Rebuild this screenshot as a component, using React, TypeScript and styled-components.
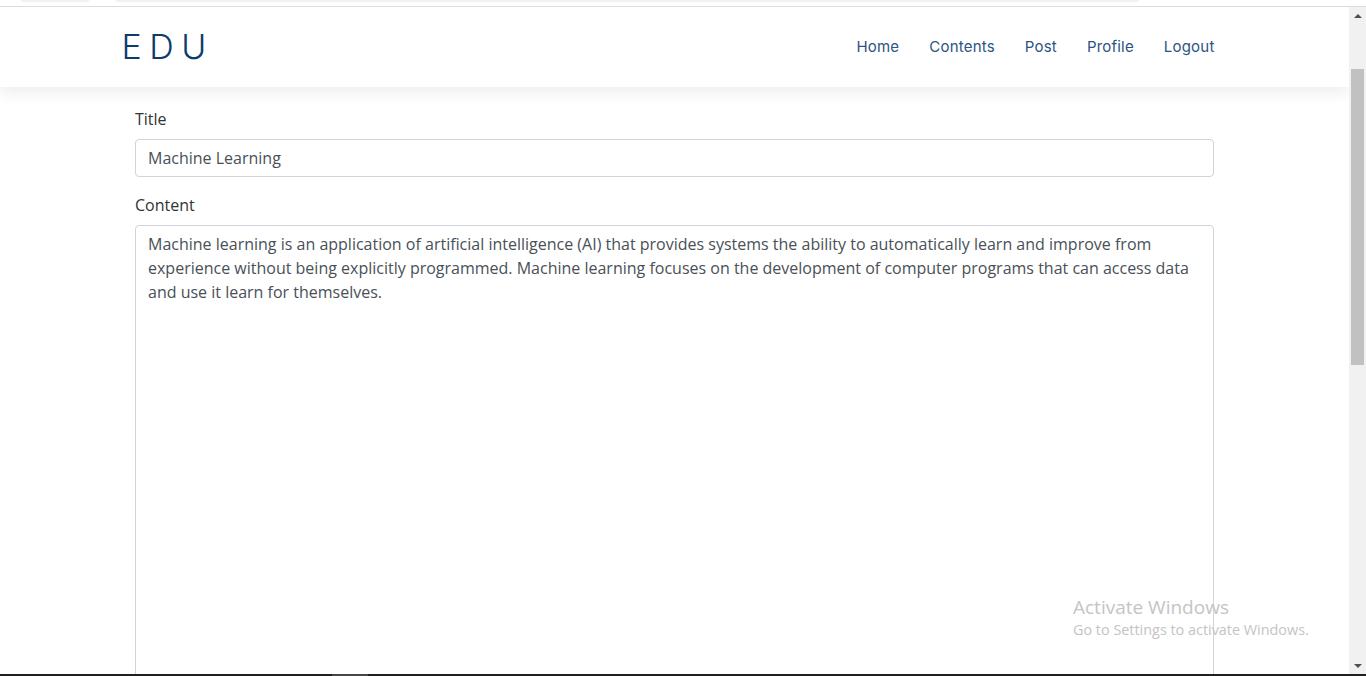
import React from "react";
import styled, { createGlobalStyle } from "styled-components";

const GlobalStyle = createGlobalStyle`
    html, body {
        margin: 0;
        padding: 0;
        height: 100%;
        overflow: hidden;
        background: #fff;
    }
    * {
        box-sizing: border-box;
    }
`;

const navLinks = ["Home", "Contents", "Post", "Profile", "Logout"];

const bodyText =
    "Machine learning is an application of artificial intelligence (AI) that provides systems the ability to automatically learn and improve from experience without being explicitly programmed. Machine learning focuses on the development of computer programs that can access data and use it learn for themselves.";

const App: React.FC = () => {
    return (
        <>
            <GlobalStyle />
            <Screen>
                <TopStrip>
                    <StripPill $left={20} $width={70} />
                    <StripPill $left={115} $width={1025} />
                </TopStrip>
                <Window>
                    <Page>
                        <Header>
                            <HeaderInner>
                                <Logo>EDU</Logo>
                                <Nav>
                                    {navLinks.map((link) => (
                                        <NavLink key={link} href="#">{link}</NavLink>
                                    ))}
                                </Nav>
                            </HeaderInner>
                        </Header>

                        <Main>
                            <FormGroup>
                                <Label>Title</Label>
                                <Input defaultValue="Machine Learning" />
                            </FormGroup>
                            <FormGroup>
                                <Label>Content</Label>
                                <TextArea defaultValue={bodyText} />
                            </FormGroup>
                        </Main>

                        <Watermark>
                            <WatermarkTitle>Activate Windows</WatermarkTitle>
                            <WatermarkSub>Go to Settings to activate Windows.</WatermarkSub>
                        </Watermark>
                    </Page>

                    {/* fake browser scrollbar */}
                    <ScrollBar>
                        <ScrollArrow $dir="up" />
                        <ScrollTrack>
                            <ScrollThumb />
                        </ScrollTrack>
                        <ScrollArrow $dir="down" />
                    </ScrollBar>
                </Window>
                <TaskBar>
                    <TaskItem />
                </TaskBar>
            </Screen>
        </>
    );
};

const Screen = styled.div`
    width: 1366px;
    height: 676px;
    display: flex;
    flex-direction: column;
    overflow: hidden;
`;

const TopStrip = styled.div`
    position: relative;
    height: 7px;
    flex-shrink: 0;
    background: #fff;
    border-bottom: 1px solid #dcdcdc;
`;

const StripPill = styled.div<{ $left: number; $width: number }>`
    position: absolute;
    top: -6px;
    left: ${(p) => p.$left}px;
    width: ${(p) => p.$width}px;
    height: 8px;
    border-radius: 6px;
    background: #f1f1f1;
`;

const Window = styled.div`
    flex: 1;
    display: flex;
    min-height: 0;
`;

const Page = styled.div`
    position: relative;
    flex: 1;
    display: flex;
    flex-direction: column;
    min-width: 0;
    overflow: hidden;
`;

const Header = styled.header`
    height: 80px;
    flex-shrink: 0;
    background: #fff;
    box-shadow: 0 6px 14px rgba(0, 0, 0, 0.07);
    position: relative;
    z-index: 1;
`;

const HeaderInner = styled.div`
    max-width: 1140px;
    height: 100%;
    margin: 0 auto;
    padding: 0 15px 0 17px;
    display: flex;
    align-items: center;
    justify-content: space-between;
`;

const Logo = styled.div`
    font-family: Inter, "Liberation Sans", sans-serif;
    font-weight: 300;
    font-size: 34px;
    letter-spacing: 7.5px;
    color: #0d3b6b;
    margin-top: -2px;
`;

const Nav = styled.nav`
    display: flex;
    align-items: center;
`;

const NavLink = styled.a`
    font-family: Inter, "Liberation Sans", sans-serif;
    font-size: 15px;
    letter-spacing: 0.2px;
    color: #2b5383;
    text-decoration: none;
    padding: 0 15px;
    line-height: 24px;
`;

const Main = styled.main`
    width: 1079px;
    margin: 0 auto;
    padding-top: 20px;
    font-family: "Open Sans", "Liberation Sans", sans-serif;
`;

const FormGroup = styled.div`
    margin-bottom: 16px;
`;

const Label = styled.label`
    display: block;
    font-size: 16px;
    line-height: 24px;
    color: #333;
    margin-bottom: 8px;
`;

const Input = styled.input`
    display: block;
    width: 100%;
    height: 38px;
    padding: 6px 12px;
    font-family: "Open Sans", "Liberation Sans", sans-serif;
    font-size: 16px;
    line-height: 24px;
    color: #495057;
    border: 1px solid #ced4da;
    border-radius: 4px;
    background: #fff;
    outline: none;
`;

const TextArea = styled.textarea`
    display: block;
    width: 100%;
    height: 520px;
    padding: 6px 12px;
    font-family: "Open Sans", "Liberation Sans", sans-serif;
    font-size: 16px;
    line-height: 24px;
    color: #495057;
    border: 1px solid #ced4da;
    border-radius: 4px;
    background: #fff;
    resize: none;
    outline: none;
`;

const Watermark = styled.div`
    position: absolute;
    left: 1073px;
    top: 588px;
    font-family: "Open Sans", "Liberation Sans", sans-serif;
    color: #c4c4c4;
    pointer-events: none;
`;

const WatermarkTitle = styled.div`
    font-size: 19px;
    line-height: 24px;
`;

const WatermarkSub = styled.div`
    font-size: 14.4px;
    line-height: 22px;
`;

const ScrollBar = styled.div`
    width: 17px;
    flex-shrink: 0;
    background: #f1f1f1;
    display: flex;
    flex-direction: column;
`;

const ScrollArrow = styled.div<{ $dir: "up" | "down" }>`
    height: 17px;
    flex-shrink: 0;
    display: flex;
    align-items: center;
    justify-content: center;
    &::before {
        content: "";
        width: 0;
        height: 0;
        border-left: 4px solid transparent;
        border-right: 4px solid transparent;
        ${(p) =>
            p.$dir === "up"
                ? "border-bottom: 4px solid #505050;"
                : "border-top: 4px solid #505050;"}
    }
`;

const ScrollTrack = styled.div`
    flex: 1;
    padding: 45px 2px 0 2px;
`;

const ScrollThumb = styled.div`
    height: 296px;
    background: #c1c1c1;
`;

const TaskBar = styled.div`
    position: relative;
    height: 2px;
    flex-shrink: 0;
    background: #202020;
`;

const TaskItem = styled.div`
    position: absolute;
    left: 332px;
    width: 36px;
    height: 100%;
    background: #474747;
`;

export default App;
